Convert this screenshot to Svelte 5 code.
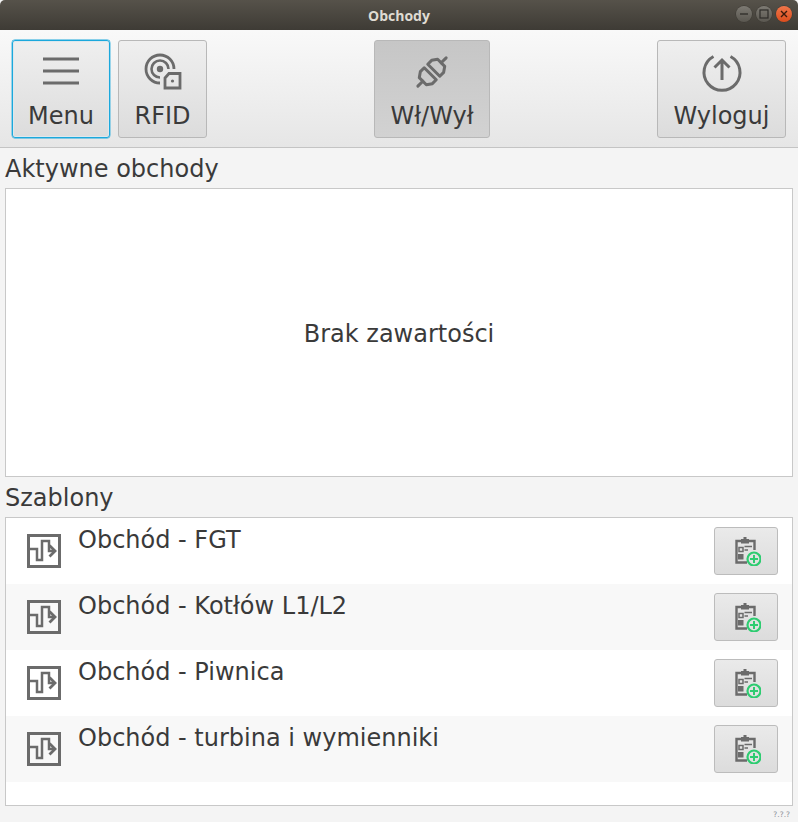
<script lang="ts">
  const templates = ['Obchód - FGT', 'Obchód - Kotłów L1/L2', 'Obchód - Piwnica', 'Obchód - turbina i wymienniki']
</script>

<div class="window">
  <header class="titlebar">
    <span class="title">Obchody</span>
    <div class="controls">
      <span class="ctl"><svg width="10" height="10" viewBox="0 0 10 10"><path d="M1 5h8" stroke="#2e2c28" stroke-width="1.3"/></svg></span>
      <span class="ctl"><svg width="10" height="10" viewBox="0 0 10 10"><rect x="1" y="1" width="8" height="8" fill="none" stroke="#2e2c28" stroke-width="1.2"/></svg></span>
      <span class="ctl close"><svg width="10" height="10" viewBox="0 0 10 10"><path d="M2 2l6 6M8 2l-6 6" stroke="#3a1a0c" stroke-width="1.4"/></svg></span>
    </div>
  </header>

  <div class="toolbar">
    <div class="group">
      <button class="tool menu focused">
        <svg width="38" height="32" viewBox="0 0 38 32" fill="none" stroke="#6b6b6b" stroke-width="3">
          <path d="M1 4h36M1 16h36M1 28h36"/>
        </svg>
        <span>Menu</span>
      </button>
      <button class="tool rfid">
        <svg width="38" height="38" viewBox="0 0 38 38" fill="none" stroke="#6b6b6b">
          <path d="M16 30A14 14 0 1 1 30 16" stroke-width="2.800"/>
          <path d="M16 24.500A8.500 8.500 0 1 1 24.500 16" stroke-width="2.600"/>
          <circle cx="16" cy="16" r="3.200" fill="#6b6b6b" stroke="none"/>
          <path d="M21 25l4-4.500h11V35H21z" stroke-width="2.800"/>
          <circle cx="28.500" cy="28" r="1.600" fill="#6b6b6b" stroke="none"/>
        </svg>
        <span>RFID</span>
      </button>
    </div>
    <button class="tool power">
      <svg width="36" height="36" viewBox="0 0 36 36" fill="none" stroke="#6b6b6b" stroke-width="3" stroke-linejoin="round" stroke-linecap="round">
        <g transform="rotate(45 18 18)">
          <path d="M9.500 15.500V10l3.500-5h10l3.500 5v5.500z"/>
          <path d="M9.500 20.500V26l3.500 5h10l3.500-5v-5.500z"/>
          <path d="M18 5V-2M18 31v7"/>
        </g>
      </svg>
      <span>Wł/Wył</span>
    </button>
    <button class="tool logout">
      <svg width="40" height="38" viewBox="0 0 40 38" fill="none" stroke="#6b6b6b" stroke-width="3">
        <path d="M11.500 3.500a18 18 0 1 0 17 0"/>
        <path d="M20 27V7M12.500 14.500L20 7l7.500 7.500"/>
      </svg>
      <span>Wyloguj</span>
    </button>
  </div>

  <main class="content">
    <h2>Aktywne obchody</h2>
    <section class="box active-box">
      <p>Brak zawartości</p>
    </section>

    <h2>Szablony</h2>
    <section class="box templates">
      {#each templates as name}
        <div class="row">
          <svg class="flow" width="34" height="34" viewBox="0 0 34 34" fill="none" stroke="#6b6b6b" stroke-width="2.500">
            <rect x="1.500" y="1.500" width="31" height="31" stroke-width="3"/>
            <path d="M3 15h7v11h5V7h7v10h5"/>
            <path d="M22.500 11.500l5.500 5.500-5.500 5.500" stroke-width="2.800"/>
          </svg>
          <span class="name">{name}</span>
          <button class="add">
            <svg width="30" height="30" viewBox="0 0 30 30" fill="none">
              <path d="M10 5H5.500v21.500H16M18 5h5.500v9" stroke="#6b6b6b" stroke-width="2.400"/>
              <rect x="10" y="3" width="8" height="4.500" fill="#6b6b6b"/>
              <rect x="12.500" y="1" width="3" height="3" fill="#6b6b6b"/>
              <rect x="8" y="11.500" width="4" height="4" fill="none" stroke="#6b6b6b" stroke-width="1.500"/>
              <path d="M13.500 10.500h7.500M13.500 14h3.500" stroke="#6b6b6b" stroke-width="1.600"/>
              <rect x="7" y="18" width="5.500" height="5.500" fill="#6b6b6b"/>
              <circle cx="23" cy="23" r="6.500" fill="#e2e2e2" stroke="#2ecc71" stroke-width="2.200"/>
              <path d="M23 19v8M19 23h8" stroke="#2ecc71" stroke-width="2"/>
            </svg>
          </button>
        </div>
      {/each}
    </section>
  </main>

  <footer class="version">?.?.?</footer>
</div>

<style>
  :global(body) {
    margin: 0;
    background: #f4f4f4;
  }

  .window {
    width: 798px;
    height: 822px;
    display: flex;
    flex-direction: column;
    overflow: hidden;
    font-family: "DejaVu Sans", sans-serif;
    color: #3a3a3a;
    background: #f4f4f4;
  }

  .titlebar {
    height: 30px;
    flex: none;
    position: relative;
    display: flex;
    align-items: center;
    justify-content: center;
    background: linear-gradient(#56524a, #3e3b35);
    border-radius: 5px 5px 0 0;
  }

  .title {
    font-family: "Open Sans", "Noto Sans", sans-serif;
    font-weight: 700;
    font-size: 14px;
    line-height: 28px;
    margin-top: 1px;
    color: #dfdbd2;
  }

  .controls {
    position: absolute;
    right: 6px;
    top: 6px;
    display: flex;
    gap: 4px;
  }

  .ctl {
    width: 16px;
    height: 16px;
    border-radius: 50%;
    display: flex;
    align-items: center;
    justify-content: center;
    background: linear-gradient(#7d7a73, #5a5750);
    box-shadow: 0 0 0 0.5px #3a3832;
  }

  .ctl.close {
    background: linear-gradient(#f0764a, #dc4d1d);
  }

  .toolbar {
    height: 118px;
    flex: none;
    box-sizing: border-box;
    display: grid;
    grid-template-columns: 362px 116px 1fr;
    padding: 10px 12px 9px;
    border-bottom: 1px solid #c4c4c4;
    background: linear-gradient(#f9f9f9, #e6e6e6);
  }

  .group {
    display: flex;
    gap: 8px;
  }

  .tool {
    height: 98px;
    box-sizing: border-box;
    padding: 0;
    display: grid;
    grid-template-rows: 60px 28px;
    justify-items: center;
    align-content: start;
    border: 1px solid #b8b8b8;
    border-radius: 3px;
    background: linear-gradient(#efefef, #dcdcdc);
    font-family: inherit;
    font-size: 24px;
    line-height: 28px;
    color: #3a3a3a;
  }

  .tool span {
    margin-top: 1px;
  }

  .tool svg {
    display: block;
    margin-top: 12px;
    overflow: visible;
  }

  .menu { width: 98px; }
  .menu svg { margin-top: 14px; }
  .rfid { width: 89px; }
  .power { width: 116px; background: linear-gradient(#c6c6c6, #d2d2d2); }
  .power svg { margin-top: 13px; }
  .logout { width: 129px; justify-self: end; }

  .focused {
    border-color: #1ba8dc;
    box-shadow: 0 0 0 0.4px #1ba8dc, inset 0 0 0 1px #dde8ed;
  }

  .content {
    flex: 1;
    display: flex;
    flex-direction: column;
    padding: 0 5px;
    min-height: 0;
  }

  h2 {
    margin: 0;
    height: 40px;
    box-sizing: border-box;
    padding-top: 7px;
    font-size: 24px;
    font-weight: 400;
    line-height: 28px;
  }

  .box {
    box-sizing: border-box;
    background: #fff;
    border: 1px solid #c8c8c8;
  }

  .active-box {
    height: 289px;
    display: flex;
    align-items: center;
    justify-content: center;
  }

  .active-box p {
    margin: 2px 0 0;
    font-size: 24px;
  }

  .templates {
    height: 289px;
  }

  .row {
    height: 66px;
    box-sizing: border-box;
    display: flex;
    align-items: flex-start;
    padding: 8px 14px 0 21px;
  }

  .row:nth-child(even) {
    background: #f8f8f8;
  }

  .flow {
    flex: none;
    margin-top: 8px;
  }

  .name {
    flex: 1;
    margin-left: 17px;
    font-size: 24px;
    line-height: 28px;
  }

  .add {
    flex: none;
    width: 64px;
    height: 48px;
    margin-top: 1px;
    padding: 0;
    display: flex;
    align-items: center;
    justify-content: center;
    border: 1px solid #bcbcbc;
    border-radius: 3px;
    background: linear-gradient(#eaeaea, #dcdcdc);
  }

  .version {
    height: 16px;
    flex: none;
    padding-right: 8px;
    text-align: right;
    font-size: 7.5px;
    line-height: 18px;
    color: #8a8f98;
  }
</style>
